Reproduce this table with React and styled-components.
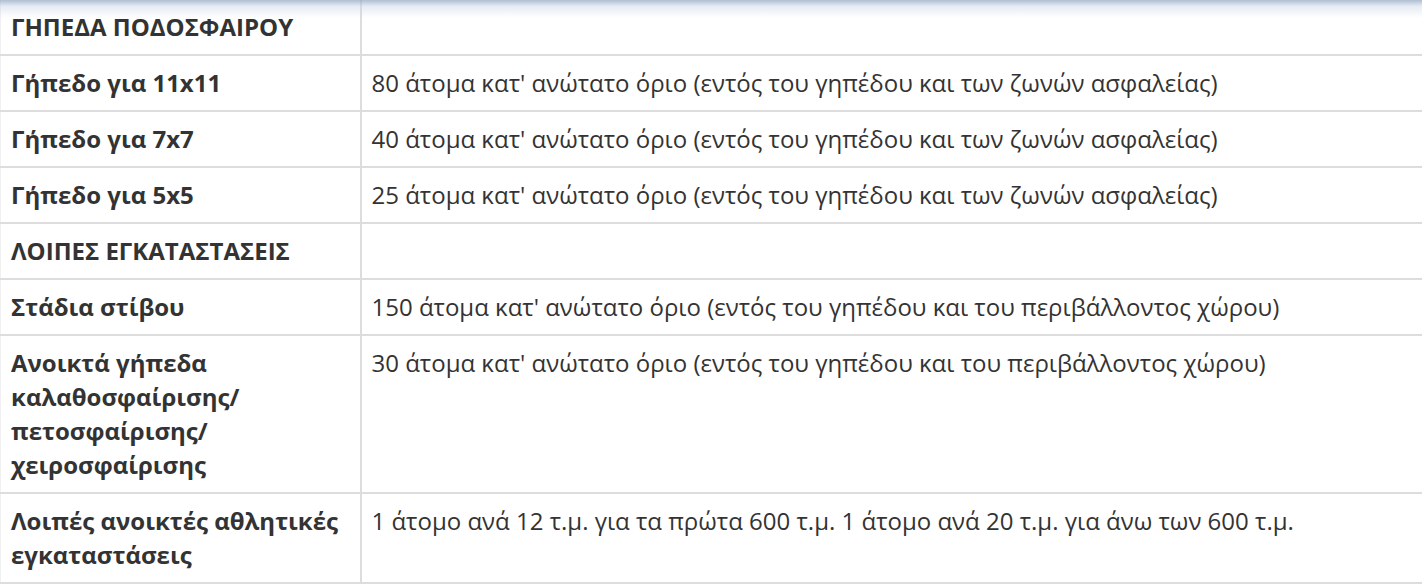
import styled, { createGlobalStyle } from "styled-components";

const GlobalStyle = createGlobalStyle`
  html, body {
    margin: 0;
    padding: 0;
    background: #ffffff;
  }
  body {
    font-family: "Open Sans", "Noto Sans", sans-serif;
    color: #333333;
  }
`

const Wrapper = styled.div`
  position: relative;
  width: 1422px;
  overflow: hidden;
  &::before {
    content: "";
    position: absolute;
    top: 0;
    left: 0;
    right: 0;
    height: 18px;
    background: linear-gradient(
      to bottom,
      rgba(150, 168, 196, 0.75) 0%,
      rgba(200, 212, 228, 0.45) 35%,
      rgba(255, 255, 255, 0) 100%
    );
    pointer-events: none;
  }
`

const Table = styled.table`
  width: 1422px;
  border-collapse: collapse;
  table-layout: fixed;
  font-size: 24px;
  line-height: 34px;
  border-left: 1px solid #f0f0f0;
`

const Row = styled.tr`
  border-bottom: 2px solid #dddddd;
`

const Cell = styled.td`
  padding: 10px 8px 10px 10px;
  vertical-align: top;
  text-align: left;
  font-weight: ${({ $bold }) => ($bold ? 700 : 400)};
  border-right: ${({ $first }) => ($first ? "2px solid #dddddd" : "none")};
`

const rows = [
  { label: "ΓΗΠΕΔΑ ΠΟΔΟΣΦΑΙΡΟΥ", value: "" },
  { label: "Γήπεδο για 11x11", value: "80 άτομα κατ' ανώτατο όριο (εντός του γηπέδου και των ζωνών ασφαλείας)" },
  { label: "Γήπεδο για 7x7", value: "40 άτομα κατ' ανώτατο όριο (εντός του γηπέδου και των ζωνών ασφαλείας)" },
  { label: "Γήπεδο για 5x5", value: "25 άτομα κατ' ανώτατο όριο (εντός του γηπέδου και των ζωνών ασφαλείας)" },
  { label: "ΛΟΙΠΕΣ ΕΓΚΑΤΑΣΤΑΣΕΙΣ", value: "" },
  { label: "Στάδια στίβου", value: "150 άτομα κατ' ανώτατο όριο (εντός του γηπέδου και του περιβάλλοντος χώρου)" },
  { label: "Ανοικτά γήπεδα καλαθοσφαίρισης/ πετοσφαίρισης/ χειροσφαίρισης", value: "30 άτομα κατ' ανώτατο όριο (εντός του γηπέδου και του περιβάλλοντος χώρου)" },
  { label: "Λοιπές ανοικτές αθλητικές εγκαταστάσεις", value: "1 άτομο ανά 12 τ.μ. για τα πρώτα 600 τ.μ. 1 άτομο ανά 20 τ.μ. για άνω των 600 τ.μ." },
]

export default function App() {
  return (
    <>
      <GlobalStyle />
      <Wrapper>
        <Table>
          <colgroup>
            <col style={{ width: 360 }} />
            <col />
          </colgroup>
          <tbody>
            {rows.map((r) => (
              <Row key={r.label}>
                <Cell $bold $first>{r.label}</Cell>
                <Cell>{r.value}</Cell>
              </Row>
            ))}
          </tbody>
        </Table>
      </Wrapper>
    </>
  )
}
